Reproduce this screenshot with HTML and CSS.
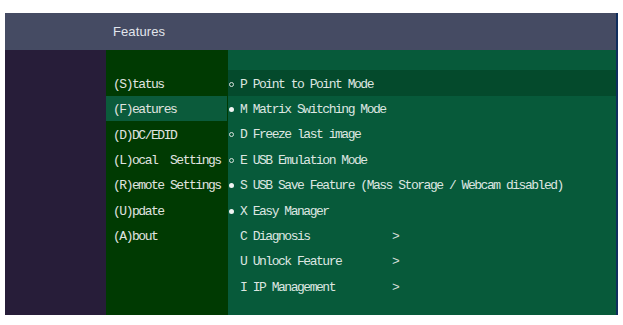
FILE: index.html
```html
<!DOCTYPE html>
<html>
<head>
<meta charset="utf-8">
<link rel="stylesheet" href="styles.css">
</head>
<body>
<div class="window">
  <div class="header"><span class="title">Features</span></div>
  <div class="main">
    <div class="rail"></div>
    <ul class="menu">
      <li class="menu-item">(S)tatus</li>
      <li class="menu-item active">(F)eatures</li>
      <li class="menu-item">(D)DC/EDID</li>
      <li class="menu-item">(L)ocal  Settings</li>
      <li class="menu-item">(R)emote Settings</li>
      <li class="menu-item">(U)pdate</li>
      <li class="menu-item">(A)bout</li>
    </ul>
    <ul class="content">
      <li class="row selected"><span class="mark"><span class="dot off"></span></span><span class="label">P Point to Point Mode</span></li>
      <li class="row"><span class="mark"><span class="dot on"></span></span><span class="label">M Matrix Switching Mode</span></li>
      <li class="row"><span class="mark"><span class="dot off"></span></span><span class="label">D Freeze last image</span></li>
      <li class="row"><span class="mark"><span class="dot off"></span></span><span class="label">E USB Emulation Mode</span></li>
      <li class="row"><span class="mark"><span class="dot on"></span></span><span class="label">S USB Save Feature (Mass Storage / Webcam disabled)</span></li>
      <li class="row"><span class="mark"><span class="dot on"></span></span><span class="label">X Easy Manager</span></li>
      <li class="row"><span class="mark"></span><span class="label sub">C Diagnosis</span><span class="arrow">&gt;</span></li>
      <li class="row"><span class="mark"></span><span class="label sub">U Unlock Feature</span><span class="arrow">&gt;</span></li>
      <li class="row"><span class="mark"></span><span class="label sub">I IP Management</span><span class="arrow">&gt;</span></li>
    </ul>
  </div>
</div>
</body>
</html>
```
FILE: styles.css
```css
html, body {
  margin: 0;
  padding: 0;
  background: #ffffff;
}

.window {
  margin: 13px 0 0 5px;
  width: 611px;
  height: 302px;
  border-right: 2px solid #0f2d5c;
  display: flex;
  flex-direction: column;
}

.header {
  flex: none;
  height: 37px;
  background: #454b63;
  display: flex;
  align-items: center;
  padding-left: 108px;
}

.title {
  font-family: "Liberation Sans", Arial, sans-serif;
  font-size: 13px;
  color: #e2e5ec;
  letter-spacing: 0.1px;
}

.main {
  flex: 1;
  display: flex;
  min-height: 0;
}

.rail {
  width: 101px;
  flex: none;
  background: #271d39;
}

.menu,
.content {
  list-style: none;
  margin: 0;
  padding: 20.3px 0 0 0;
  font-family: "Liberation Mono", "DejaVu Sans Mono", monospace;
  font-size: 13px;
  letter-spacing: -1.47px;
}

.menu {
  width: 122px;
  flex: none;
  background: #003a02;
}

.menu-item {
  box-sizing: border-box;
  height: 25.375px;
  line-height: 23px;
  padding: 2.5px 0 0 7px;
  margin-right: 1px;
  color: #e0e4e0;
  white-space: pre;
}

.menu-item.active {
  background: #0b5b3b;
}

.content {
  flex: 1;
  background: #075a3a;
}

.row {
  box-sizing: border-box;
  height: 25.375px;
  line-height: 23px;
  padding-top: 2.5px;
  display: flex;
  align-items: center;
  color: #dde6e1;
  white-space: pre;
}

.row.selected {
  background: #044a2c;
}

.mark {
  width: 12px;
  flex: none;
  display: flex;
  align-items: center;
}

.dot {
  width: 5px;
  height: 5px;
  border-radius: 50%;
  margin-left: 1px;
  box-sizing: border-box;
}

.dot.off {
  border: 1px solid #d8e2dc;
}

.dot.on {
  background: #f0f4f2;
}

.label.sub {
  width: 152px;
}

.arrow {
  color: #d6ded9;
}
```
